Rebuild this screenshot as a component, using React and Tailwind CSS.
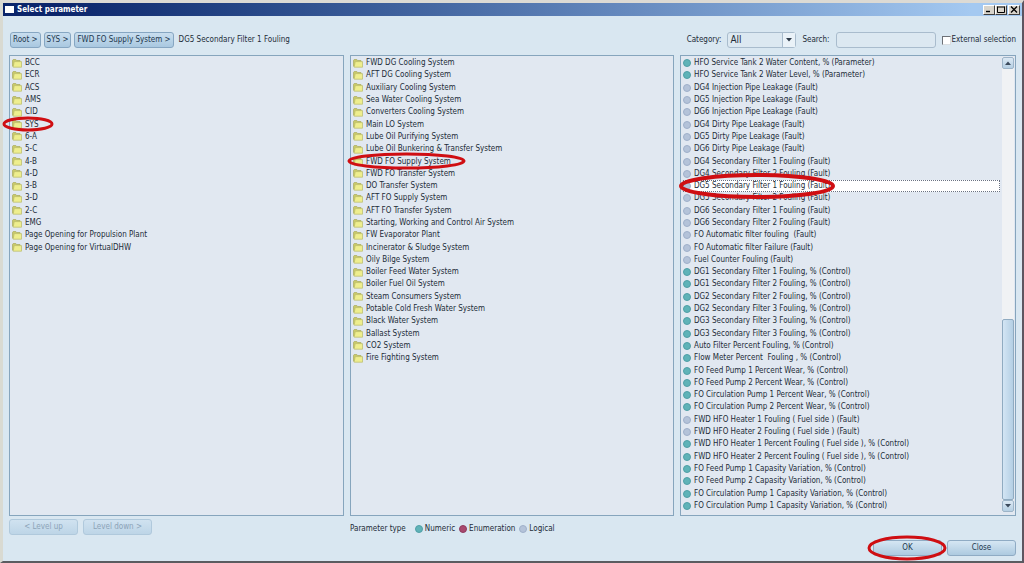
import { useState } from 'react'

const ROOT_FOLDERS = [
  'BCC', 'ECR', 'ACS', 'AMS', 'CID', 'SYS', '6-A', '5-C', '4-B', '4-D', '3-B', '3-D', '2-C', 'EMG',
  'Page Opening for Propulsion Plant',
  'Page Opening for VirtualDHW'
]

const SYSTEM_FOLDERS = [
  'FWD DG Cooling System',
  'AFT DG Cooling System',
  'Auxiliary Cooling System',
  'Sea Water Cooling System',
  'Converters Cooling System',
  'Main LO System',
  'Lube Oil Purifying System',
  'Lube Oil Bunkering & Transfer System',
  'FWD FO Supply System',
  'FWD FO Transfer System',
  'DO Transfer System',
  'AFT FO Supply System',
  'AFT FO Transfer System',
  'Starting, Working and Control Air System',
  'FW Evaporator Plant',
  'Incinerator & Sludge System',
  'Oily Bilge System',
  'Boiler Feed Water System',
  'Boiler Fuel Oil System',
  'Steam Consumers System',
  'Potable Cold Fresh Water System',
  'Black Water System',
  'Ballast System',
  'CO2 System',
  'Fire Fighting System'
]

const PARAMETERS = [
  { type: 'numeric', name: 'HFO Service Tank 2 Water Content, % (Parameter)' },
  { type: 'numeric', name: 'HFO Service Tank 2 Water Level, % (Parameter)' },
  { type: 'logical', name: 'DG4 Injection Pipe Leakage (Fault)' },
  { type: 'logical', name: 'DG5 Injection Pipe Leakage (Fault)' },
  { type: 'logical', name: 'DG6 Injection Pipe Leakage (Fault)' },
  { type: 'logical', name: 'DG4 Dirty Pipe Leakage (Fault)' },
  { type: 'logical', name: 'DG5 Dirty Pipe Leakage (Fault)' },
  { type: 'logical', name: 'DG6 Dirty Pipe Leakage (Fault)' },
  { type: 'logical', name: 'DG4 Secondary Filter 1 Fouling (Fault)' },
  { type: 'logical', name: 'DG4 Secondary Filter 2 Fouling (Fault)' },
  { type: 'logical', name: 'DG5 Secondary Filter 1 Fouling (Fault)' },
  { type: 'logical', name: 'DG5 Secondary Filter 2 Fouling (Fault)' },
  { type: 'logical', name: 'DG6 Secondary Filter 1 Fouling (Fault)' },
  { type: 'logical', name: 'DG6 Secondary Filter 2 Fouling (Fault)' },
  { type: 'logical', name: 'FO Automatic filter fouling  (Fault)' },
  { type: 'logical', name: 'FO Automatic filter Failure (Fault)' },
  { type: 'logical', name: 'Fuel Counter Fouling (Fault)' },
  { type: 'numeric', name: 'DG1 Secondary Filter 1 Fouling, % (Control)' },
  { type: 'numeric', name: 'DG1 Secondary Filter 2 Fouling, % (Control)' },
  { type: 'numeric', name: 'DG2 Secondary Filter 2 Fouling, % (Control)' },
  { type: 'numeric', name: 'DG2 Secondary Filter 3 Fouling, % (Control)' },
  { type: 'numeric', name: 'DG3 Secondary Filter 3 Fouling, % (Control)' },
  { type: 'numeric', name: 'DG3 Secondary Filter 3 Fouling, % (Control)' },
  { type: 'numeric', name: 'Auto Filter Percent Fouling, % (Control)' },
  { type: 'numeric', name: 'Flow Meter Percent  Fouling , % (Control)' },
  { type: 'numeric', name: 'FO Feed Pump 1 Percent Wear, % (Control)' },
  { type: 'numeric', name: 'FO Feed Pump 2 Percent Wear, % (Control)' },
  { type: 'numeric', name: 'FO Circulation Pump 1 Percent Wear, % (Control)' },
  { type: 'numeric', name: 'FO Circulation Pump 2 Percent Wear, % (Control)' },
  { type: 'logical', name: 'FWD HFO Heater 1 Fouling ( Fuel side ) (Fault)' },
  { type: 'logical', name: 'FWD HFO Heater 2 Fouling ( Fuel side ) (Fault)' },
  { type: 'numeric', name: 'FWD HFO Heater 1 Percent Fouling ( Fuel side ), % (Control)' },
  { type: 'numeric', name: 'FWD HFO Heater 2 Percent Fouling ( Fuel side ), % (Control)' },
  { type: 'numeric', name: 'FO Feed Pump 1 Capasity Variation, % (Control)' },
  { type: 'numeric', name: 'FO Feed Pump 2 Capasity Variation, % (Control)' },
  { type: 'numeric', name: 'FO Circulation Pump 1 Capasity Variation, % (Control)' },
  { type: 'numeric', name: 'FO Circulation Pump 1 Capasity Variation, % (Control)' }
]

const DOT_COLORS = {
  numeric: 'bg-[#5fb3b8] border-[#4f9fa6]',
  enumeration: 'bg-[#a8496e] border-[#8f3a5e]',
  logical: 'bg-[#b4c3d9] border-[#9fb0ca]'
}

const Dot = ({ type }) => (
  <span className={`size-2 shrink-0 rounded-full border ${DOT_COLORS[type]}`} />
)

const FolderIcon = () => (
  <svg viewBox="0 0 10 9" className="h-[9px] w-[10px] shrink-0" aria-hidden="true">
    <path d="M0.5 7.5V1.2L1.2 0.5H3.8L4.6 1.5H8V3" fill="#c9c96a" stroke="#a9ab5c" strokeWidth="0.7" />
    <path d="M2.2 2.6H9.5V8.2H1.2Z" fill="#eeee8e" stroke="#b9ba68" strokeWidth="0.7" />
  </svg>
)

// Red marker ring drawn over the control to click
const Ring = ({ className }) => (
  <svg className={`pointer-events-none absolute z-10 overflow-visible ${className}`} aria-hidden="true">
    <ellipse cx="50%" cy="50%" rx="50%" ry="50%" fill="none" stroke="#cf0e12" />
  </svg>
)

const Panel = ({ label, children, scroll }) => (
  <section aria-label={label} className="flex min-w-0 border border-[#86a5bd] bg-[#e1e8f1] pt-px pb-[3px] pl-[2px]">
    <ul className="grid min-w-0 flex-1 grid-rows-[repeat(37,minmax(12px,1fr))]">{children}</ul>
    {scroll}
  </section>
)

const Row = ({ icon, name, selected, onClick, ring }) => (
  <li className="relative flex min-w-0">
    <button
      type="button"
      onClick={onClick}
      className={`flex min-w-0 flex-1 items-center gap-[3px] text-left leading-3 whitespace-pre ${selected ? 'bg-white outline-1 -outline-offset-1 outline-dotted outline-gray-500' : ''}`}
    >
      {icon}
      {name}
    </button>
    {ring && <Ring className={ring} />}
  </li>
)

const ScrollBar = () => (
  <div className="mr-px ml-[2px] flex w-3 flex-col bg-[#f0f2f4]">
    <button type="button" aria-label="Scroll up" className="flex h-3 items-center justify-center rounded-xs border border-[#9db4c8] bg-linear-to-b from-[#dce9f4] to-[#b5cfe3]">
      <svg viewBox="0 0 6 4" className="h-1 w-1.5"><path d="M0 4L3 0.5L6 4Z" fill="#3b4a5c" /></svg>
    </button>
    <div className="flex-[253]" />
    <div className="flex-[181] rounded-xs border border-[#90abc1] bg-linear-to-r from-[#d3e5f4] to-[#b4cfe4]" />
    <button type="button" aria-label="Scroll down" className="flex h-3 items-center justify-center rounded-xs border border-[#9db4c8] bg-linear-to-b from-[#dce9f4] to-[#b5cfe3]">
      <svg viewBox="0 0 6 4" className="h-1 w-1.5"><path d="M0 0L3 3.5L6 0Z" fill="#3b4a5c" /></svg>
    </button>
  </div>
)

const Crumb = ({ children }) => (
  <button type="button" className="h-4 rounded-[3px] border border-[#86a6c2] bg-linear-to-b from-[#c9deef] to-[#a9c8e0] px-[2px] leading-3 text-[#22384e]">
    {children}
  </button>
)

const DialogButton = ({ children, disabled }) => (
  <button
    type="button"
    disabled={disabled}
    className="h-4 w-[69px] rounded-[3px] border border-[#8fabc4] bg-linear-to-b from-[#d5e6f3] to-[#adcae0] leading-3 text-[#22384e] disabled:border-[#b0c9dc] disabled:from-[#d0e2f0] disabled:to-[#bdd5e7] disabled:text-[#8ca3b8]"
  >
    {children}
  </button>
)

const TitleButton = ({ label, children }) => (
  <button type="button" aria-label={label} className="flex h-[10px] w-3 items-center justify-center border border-t-white border-r-[#404040] border-b-[#404040] border-l-white bg-[#d8d4cb]">
    <svg viewBox="0 0 8 7" className="h-[7px] w-2" fill="none" stroke="#000">{children}</svg>
  </button>
)

export default function App() {
  const [folder, setFolder] = useState('SYS')
  const [system, setSystem] = useState('FWD FO Supply System')
  const [selected, setSelected] = useState(10)

  return (
    <div className="flex min-h-screen flex-col border-t-[3px] border-r-2 border-b-2 border-l-[3px] border-t-[#dcdad4] border-r-[#5d5560] border-b-[#5b5c60] border-l-[#d9dad2] bg-[#d9e7f1] font-['DejaVu_Sans_Condensed','DejaVu_Sans',sans-serif] text-[8px] text-[#222c38]">
      <header className="flex h-[13px] items-center bg-linear-to-r from-[#0b256b] from-5% to-[#a4c9f1] to-95% px-[2px]">
        <span className="h-[7px] w-[9px] bg-white" />
        <h1 className="ml-[3px] flex-1 leading-3 font-bold text-white">Select parameter</h1>
        <div className="flex">
          <TitleButton label="Minimize"><path d="M1 5.5H5" strokeWidth="1.4" /></TitleButton>
          <TitleButton label="Maximize"><path d="M0.5 1H7.5M0.5 0.5V6.5H7.5V0.5" /></TitleButton>
          <span className="w-px" />
          <TitleButton label="Close window"><path d="M1 0.5L7 6.5M7 0.5L1 6.5" strokeWidth="1.3" /></TitleButton>
        </div>
      </header>

      <div className="flex items-center pt-4 pr-[6px] pb-[7px] pl-[7px]">
        <nav aria-label="Path" className="flex flex-1 items-center gap-[3px]">
          <Crumb>Root &gt;</Crumb>
          <Crumb>SYS &gt;</Crumb>
          <Crumb>FWD FO Supply System &gt;</Crumb>
          <span className="ml-[2px]">DG5 Secondary Filter 1 Fouling</span>
        </nav>
        <label htmlFor="category">Category:</label>
        <div className="relative ml-[6px] flex">
          <select id="category" className="h-4 w-[69px] appearance-none rounded-[3px] border border-[#a9bccd] bg-[#dce8f1] pl-[2px] text-[10px] leading-3">
            <option>All</option>
          </select>
          <span className="pointer-events-none absolute inset-y-px right-px flex w-[13px] items-center justify-center border-l border-[#a9bccd] bg-[#eaf2f8]">
            <svg viewBox="0 0 6 4" className="h-1 w-1.5"><path d="M0 0L3 3.5L6 0Z" fill="#2f3b49" /></svg>
          </span>
        </div>
        <label htmlFor="search" className="ml-[6px]">Search:</label>
        <input id="search" type="text" className="ml-[6px] h-4 w-[100px] rounded-[3px] border border-[#a9bccd] bg-[#dce8f1] px-1" />
        <label className="ml-[6px] flex items-center gap-px">
          <input type="checkbox" className="size-[9px] appearance-none border border-t-[#6d7177] border-r-[#d9dde0] border-b-[#d9dde0] border-l-[#6d7177] bg-white checked:bg-[#3b6ea5]" />
          External selection
        </label>
      </div>

      <main className="grid flex-1 grid-cols-[335fr_324fr_336fr] gap-[6px] px-[6px]">
        <Panel label="Folders">
          {ROOT_FOLDERS.map((name) => (
            <Row
              key={name}
              icon={<FolderIcon />}
              name={name}
              onClick={() => setFolder(name)}
              ring={name === folder ? 'top-0 -left-2 h-3 w-12 stroke-3' : ''}
            />
          ))}
        </Panel>
        <Panel label="Systems">
          {SYSTEM_FOLDERS.map((name) => (
            <Row
              key={name}
              icon={<FolderIcon />}
              name={name}
              onClick={() => setSystem(name)}
              ring={name === system ? '-top-px -left-1 h-[14px] w-[115px] stroke-3' : ''}
            />
          ))}
        </Panel>
        <Panel label="Parameters" scroll={<ScrollBar />}>
          {PARAMETERS.map((param, i) => (
            <Row
              key={i}
              icon={<Dot type={param.type} />}
              name={param.name}
              selected={i === selected}
              onClick={() => setSelected(i)}
              ring={i === selected ? '-top-[5px] -left-[2px] h-[22px] w-[152px] stroke-4' : ''}
            />
          ))}
        </Panel>
      </main>

      <footer className="flex flex-col gap-[5px] px-[6px] pt-[3px] pb-[5px]">
        <div className="grid grid-cols-[335fr_666fr] gap-[6px]">
          <div className="flex gap-[5px]">
            <DialogButton disabled>&lt; Level up</DialogButton>
            <DialogButton disabled>Level down &gt;</DialogButton>
          </div>
          <div className="flex items-end gap-1 leading-3">
            <span className="mr-[5px]">Parameter type</span>
            <span className="flex items-center gap-[2px]"><Dot type="numeric" />Numeric</span>
            <span className="flex items-center gap-[2px]"><Dot type="enumeration" />Enumeration</span>
            <span className="flex items-center gap-[2px]"><Dot type="logical" />Logical</span>
          </div>
        </div>
        <div className="flex justify-end gap-[5px]">
          <div className="relative flex">
            <DialogButton>OK</DialogButton>
            <Ring className="-top-[3px] -left-1 h-[22px] w-[76px] stroke-3" />
          </div>
          <DialogButton>Close</DialogButton>
        </div>
      </footer>
    </div>
  )
}
